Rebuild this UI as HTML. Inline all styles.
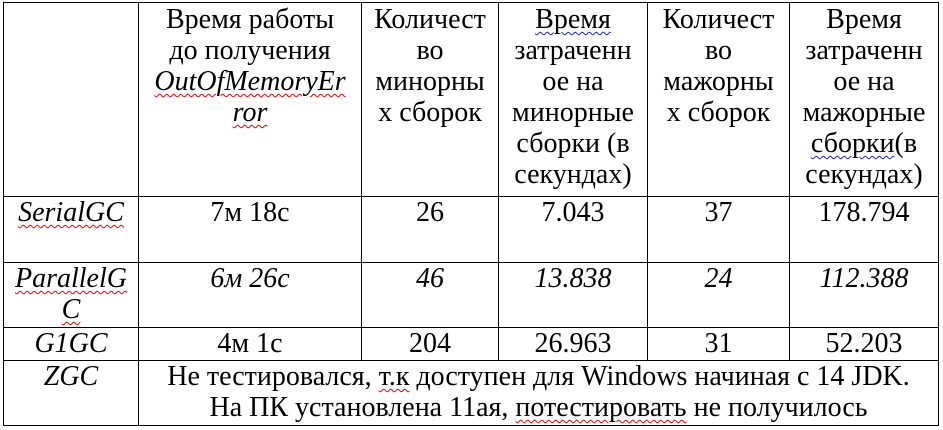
<!DOCTYPE html>
<html><head><meta charset="utf-8"><style>
html,body{margin:0;padding:0;background:#fff;width:943px;height:430px;overflow:hidden}
body{position:relative;font-family:"Liberation Serif","Times New Roman",serif;font-size:28px;color:#000}
.h{position:absolute;height:1px;background:#000}
.v{position:absolute;width:1px;background:#000}
.c{position:absolute;text-align:center;line-height:31px;white-space:nowrap}
i{font-style:italic}
.r{text-decoration:underline wavy #e00;text-decoration-thickness:1px;text-underline-offset:3px}
.b{text-decoration:underline wavy #22c;text-decoration-thickness:1px;text-underline-offset:3px}
</style></head><body>
<div class="h" style="left:3px;top:2px;width:936px"></div>
<div class="h" style="left:3px;top:196px;width:936px"></div>
<div class="h" style="left:3px;top:262px;width:936px"></div>
<div class="h" style="left:3px;top:327px;width:936px"></div>
<div class="h" style="left:3px;top:360px;width:936px"></div>
<div class="h" style="left:3px;top:425px;width:936px"></div>
<div class="v" style="left:3px;top:2px;height:424px"></div>
<div class="v" style="left:138px;top:2px;height:424px"></div>
<div class="v" style="left:361px;top:2px;height:358px"></div>
<div class="v" style="left:498px;top:2px;height:358px"></div>
<div class="v" style="left:647px;top:2px;height:358px"></div>
<div class="v" style="left:789px;top:2px;height:358px"></div>
<div class="v" style="left:938px;top:2px;height:424px"></div>

<div class="c" style="left:139px;width:222px;top:4px">Время работы<br>до получения<br><i class="r">OutOfMemoryEr</i><br><i class="r">ror</i></div>
<div class="c" style="left:362px;width:136px;top:4px">Количест<br>во<br>минорны<br>х сборок</div>
<div class="c" style="left:499px;width:148px;top:4px"><span class="b">Время</span><br>затраченн<br>ое на<br>минорные<br>сборки (в<br>секундах)</div>
<div class="c" style="left:648px;width:141px;top:4px">Количест<br>во<br>мажорны<br>х сборок</div>
<div class="c" style="left:790px;width:148px;top:4px">Время<br>затраченн<br>ое на<br>мажорные<br><span class="b">сборки</span>(в<br>секундах)</div>

<div class="c" style="left:4px;width:134px;top:197px"><i class="r">SerialGC</i></div>
<div class="c" style="left:139px;width:222px;top:197px">7м 18с</div>
<div class="c" style="left:362px;width:136px;top:197px">26</div>
<div class="c" style="left:499px;width:148px;top:197px">7.043</div>
<div class="c" style="left:648px;width:141px;top:197px">37</div>
<div class="c" style="left:790px;width:148px;top:197px">178.794</div>

<div class="c" style="left:4px;width:134px;top:263px"><i class="r">ParallelG</i><br><i class="r">C</i></div>
<div class="c" style="left:139px;width:222px;top:263px"><i>6м 26с</i></div>
<div class="c" style="left:362px;width:136px;top:263px"><i>46</i></div>
<div class="c" style="left:499px;width:148px;top:263px"><i>13.838</i></div>
<div class="c" style="left:648px;width:141px;top:263px"><i>24</i></div>
<div class="c" style="left:790px;width:148px;top:263px"><i>112.388</i></div>

<div class="c" style="left:4px;width:134px;top:328px"><i>G1GC</i></div>
<div class="c" style="left:139px;width:222px;top:328px">4м 1с</div>
<div class="c" style="left:362px;width:136px;top:328px">204</div>
<div class="c" style="left:499px;width:148px;top:328px">26.963</div>
<div class="c" style="left:648px;width:141px;top:328px">31</div>
<div class="c" style="left:790px;width:148px;top:328px">52.203</div>

<div class="c" style="left:4px;width:134px;top:361px"><i>ZGC</i></div>
<div class="c" style="left:139px;width:799px;top:361px">Не тестировался, <span class="r">т.к</span> доступен для Windows начиная с 14 JDK.<br>На ПК установлена 11ая, <span class="r">потестировать</span> не получилось</div>
</body></html>
